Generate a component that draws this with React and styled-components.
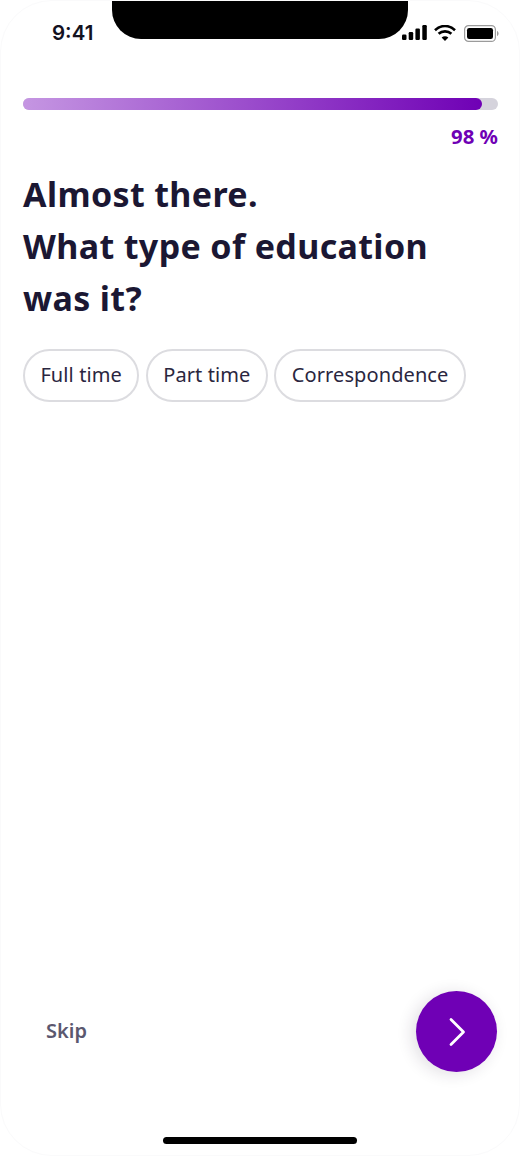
import React from "react";
import styled, { createGlobalStyle } from "styled-components";

const Global = createGlobalStyle`
  html, body { margin: 0; padding: 0; background: #fff; }
  * { box-sizing: border-box; }
`;

const Screen = styled.div`
  width: 520px;
  height: 1156px;
  background: #fff;
  border: 1px solid #fafafb;
  border-radius: 52px;
  display: flex;
  flex-direction: column;
  font-family: "Noto Sans", "Open Sans", sans-serif;
  color: #1b1733;
  overflow: hidden;
`;

const StatusBar = styled.div`
  height: 39px;
  margin-top: -1px;
  flex: none;
  display: grid;
  grid-template-columns: 111px 296px 1fr;
  grid-template-rows: 39px;
`;

const Time = styled.div`
  font-family: Inter, sans-serif;
  font-weight: 600;
  font-size: 20.5px;
  line-height: 24px;
  padding: 21px 0 0 51px;
  white-space: nowrap;
  color: #14121f;
`;

const Notch = styled.div`
  background: #000;
  border-radius: 0 0 29px 29px;
`;

const StatusIcons = styled.div`
  display: flex;
  align-items: flex-start;
  justify-content: flex-end;
  gap: 7px;
  padding: 25px 20px 0 0;
  margin-left: -20px;
`;

const Main = styled.main`
  flex: 1;
  padding: 59px 21px 0 22px;
  display: flex;
  flex-direction: column;
`;

const Track = styled.div`
  height: 12px;
  border-radius: 6px;
  background: #d5d3dc;
`;

const Fill = styled.div`
  height: 100%;
  border-radius: 6px;
  background: linear-gradient(90deg, #c596e2 0%, #6f00b5 100%);
`;

const Percent = styled.div`
  margin-top: 12px;
  text-align: right;
  font-weight: 700;
  font-size: 20.4px;
  line-height: 28px;
  color: #6f00b5;
`;

const Title = styled.h1`
  margin: 18px 0 0;
  font-weight: 700;
  font-size: 34px;
  letter-spacing: 0.36px;
  line-height: 52px;
  color: #1b1733;
`;

const Chips = styled.div`
  margin-top: 25px;
  display: flex;
  gap: 6.5px;
`;

const Chip = styled.div`
  height: 53px;
  padding: 0 15.4px 3px;
  display: flex;
  align-items: center;
  border: 2px solid #dcdce0;
  border-radius: 27px;
  font-size: 20px;
  letter-spacing: 0.1px;
  color: #2a2640;
  white-space: nowrap;
`;

const Footer = styled.div`
  flex: none;
  display: flex;
  align-items: center;
  justify-content: space-between;
  padding: 0 22px 0 45px;
`;

const Skip = styled.div`
  font-weight: 600;
  font-size: 20px;
  padding-bottom: 2px;
  color: #5b586f;
`;

const Fab = styled.div`
  width: 81px;
  height: 81px;
  border-radius: 50%;
  background: #6f00b5;
  display: flex;
  align-items: center;
  justify-content: center;
  box-shadow: -4px 2px 16px rgba(40, 30, 60, 0.14);
`;

const HomeArea = styled.div`
  flex: none;
  height: 83px;
  display: flex;
  justify-content: center;
  padding-top: 65px;
`;

const HomeBar = styled.div`
  width: 194px;
  height: 7px;
  border-radius: 4px;
  background: #000;
`;

const chips = ["Full time", "Part time", "Correspondence"];

export default function App() {
  return (
    <>
      <Global />
      <Screen>
        <StatusBar>
          <Time>9:41</Time>
          <Notch />
          <StatusIcons>
            <svg width="25" height="15" viewBox="0 0 25 15" fill="#000">
              <rect x="0" y="9.500" width="4.500" height="5.500" rx="1.200" />
              <rect x="6.700" y="7" width="4.500" height="8" rx="1.200" />
              <rect x="13.400" y="3.500" width="4.500" height="11.500" rx="1.200" />
              <rect x="20.300" y="0" width="4.500" height="15" rx="1.200" />
            </svg>
            <svg width="22" height="16" viewBox="0 0 22 16" fill="none" stroke="#000" strokeWidth="2.600" style={{ marginRight: 1 }}>
              <path d="M1 5.200C6.800-.4 15.200-.4 21 5.200" />
              <path d="M4.600 8.800c3.600-3.300 9.200-3.300 12.800 0" />
              <path d="M11 16l-3.400-3.600c2-1.600 4.800-1.600 6.800 0z" fill="#000" stroke="none" />
            </svg>
            <svg width="35" height="17" viewBox="0 0 35 17" fill="none">
              <rect x=".6" y=".6" width="30.800" height="15.800" rx="4" stroke="#9b9b9b" strokeWidth="1.200" />
              <rect x="3" y="3" width="26" height="11" rx="2.200" fill="#000" />
              <path d="M33 6v5c.9-.3 1.600-1.300 1.600-2.500S33.900 6.300 33 6z" fill="#9b9b9b" />
            </svg>
          </StatusIcons>
        </StatusBar>
        <Main>
          <Track>
            <Fill style={{ width: `${(459 / 475) * 100}%` }} />
          </Track>
          <Percent>98 %</Percent>
          <Title>
            Almost there.
            <br />
            What type of education
            <br />
            was it?
          </Title>
          <Chips>
            {chips.map((c) => (
              <Chip key={c}>{c}</Chip>
            ))}
          </Chips>
        </Main>
        <Footer>
          <Skip>Skip</Skip>
          <Fab>
            <svg width="18" height="30" viewBox="0 0 18 30" fill="none" stroke="#fff" strokeWidth="2.800" strokeLinecap="round" strokeLinejoin="round">
              <path d="M3 2.500L15.500 15 3 27.500" />
            </svg>
          </Fab>
        </Footer>
        <HomeArea>
          <HomeBar />
        </HomeArea>
      </Screen>
    </>
  );
}
